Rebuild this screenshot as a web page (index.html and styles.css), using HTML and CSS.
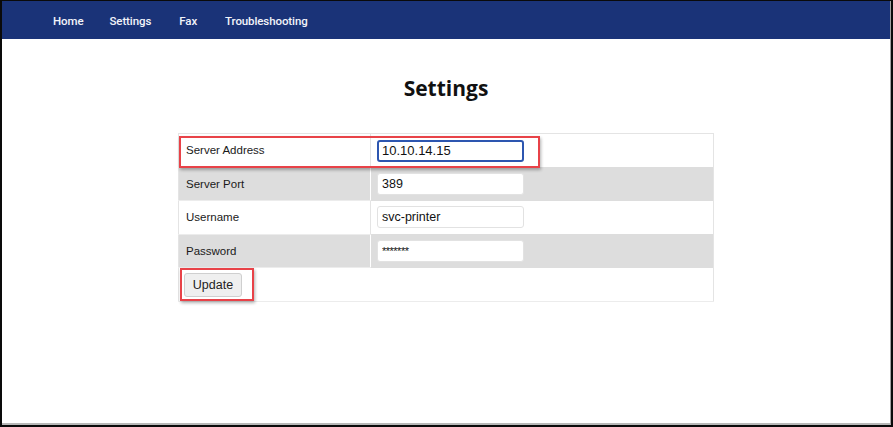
FILE: index.html
```html
<!DOCTYPE html>
<html>
<head>
<meta charset="utf-8">
<link rel="stylesheet" href="styles.css">
</head>
<body>
<div class="frame">
  <div class="inner">
    <nav class="nav">
      <a class="nav-link first">Home</a>
      <a class="nav-link">Settings</a>
      <a class="nav-link">Fax</a>
      <a class="nav-link">Troubleshooting</a>
    </nav>
    <main class="main">
      <h1 class="title">Settings</h1>
      <div class="form-wrap">
        <table class="settings">
          <tr class="row">
            <td class="label">Server Address</td>
            <td class="value"><input class="field focused" type="text" value="10.10.14.15"></td>
          </tr>
          <tr class="row striped">
            <td class="label">Server Port</td>
            <td class="value"><input class="field" type="text" value="389"></td>
          </tr>
          <tr class="row">
            <td class="label">Username</td>
            <td class="value"><input class="field" type="text" value="svc-printer"></td>
          </tr>
          <tr class="row striped">
            <td class="label">Password</td>
            <td class="value"><input class="field pw" type="text" value="*******"></td>
          </tr>
          <tr class="row last">
            <td class="label btn-cell" colspan="2"><button class="btn">Update</button></td>
          </tr>
        </table>
        <div class="mark mark-addr"></div>
        <div class="mark mark-btn"></div>
      </div>
    </main>
  </div>
</div>
</body>
</html>
```
FILE: styles.css
```css
* { box-sizing: border-box; }
html, body { margin: 0; padding: 0; background: #000; }
body { width: 893px; height: 427px; overflow: hidden; }
.frame {
  width: 893px; height: 427px;
  border-left: 2px solid #0a0a0a;
  border-top: 1px solid #0a0a0a;
  border-right: 2px solid #0a0a0a;
  border-bottom: 2px solid #0a0a0a;
}
.inner {
  height: 100%;
  background: #fff;
  border-right: 1px solid #a0a0a0;
  border-bottom: 2px solid #b8b8b8;
  display: flex; flex-direction: column;
}
.nav {
  height: 38px;
  background: #1a3378;
  display: flex; align-items: center;
  padding-left: 51px;
  padding-top: 1px;
  font-family: Roboto, "DejaVu Sans", sans-serif;
  font-size: 11.5px; font-weight: 500;
  color: #f2f4fa;
}
.nav-link { margin-right: 28px; letter-spacing: -0.1px; }
.nav-link.first { margin-right: 26px; }
.main { display: flex; flex-direction: column; align-items: center; }
.title {
  margin: 34px 0 0 0;
  font-family: "Open Sans", "DejaVu Sans", sans-serif;
  font-size: 21px; font-weight: 700; color: #111;
  line-height: 30px;
}
.form-wrap { position: relative; margin-top: 30px; margin-left: 0; }
.settings {
  width: 536px;
  border-collapse: collapse;
  border: 1px solid #e4e4e4;
  font-family: "Liberation Sans", Arial, sans-serif;
  font-size: 11.5px; color: #1a1a1a;
}
.row td { height: 33.5px; padding: 0; vertical-align: middle; }
.row.striped { background: #dddddd; }
.label { width: 192px; padding-left: 7px !important; border-right: 1px solid #e4e4e4; border-bottom: 1px solid #ececec; }
.row.striped .label { border-right-color: #fff; }
.value { padding-left: 6px !important; }
.btn-cell { border-right: none; padding-left: 5px !important; padding-top: 2px !important; }
.field {
  width: 147px; height: 22px;
  border: 1px solid #e2e2e2; border-radius: 3px;
  background: #fff;
  font-family: "Liberation Sans", Arial, sans-serif;
  font-size: 12.5px; color: #111;
  padding: 0 4px;
  outline: none;
}
.field.pw { font-size: 11px; letter-spacing: -0.5px; }
.field.focused { border: 2px solid #2d56b0; padding: 0 3px; font-size: 13px; }
.btn {
  height: 24px; width: 58px;
  background: #efefef;
  border: 1px solid #cfcfcf; border-radius: 3px;
  font-family: "Liberation Sans", Arial, sans-serif;
  font-size: 12.5px; color: #222;
  padding: 0;
}
.mark {
  position: absolute;
  border: 2px solid #e84248;
  box-shadow: 1px 2px 3px rgba(0,0,0,0.3);
}
.mark-addr { left: 1px; top: 3px; width: 361px; height: 32px; }
.mark-btn { left: 2px; top: 135px; width: 74px; height: 33px; }
```
